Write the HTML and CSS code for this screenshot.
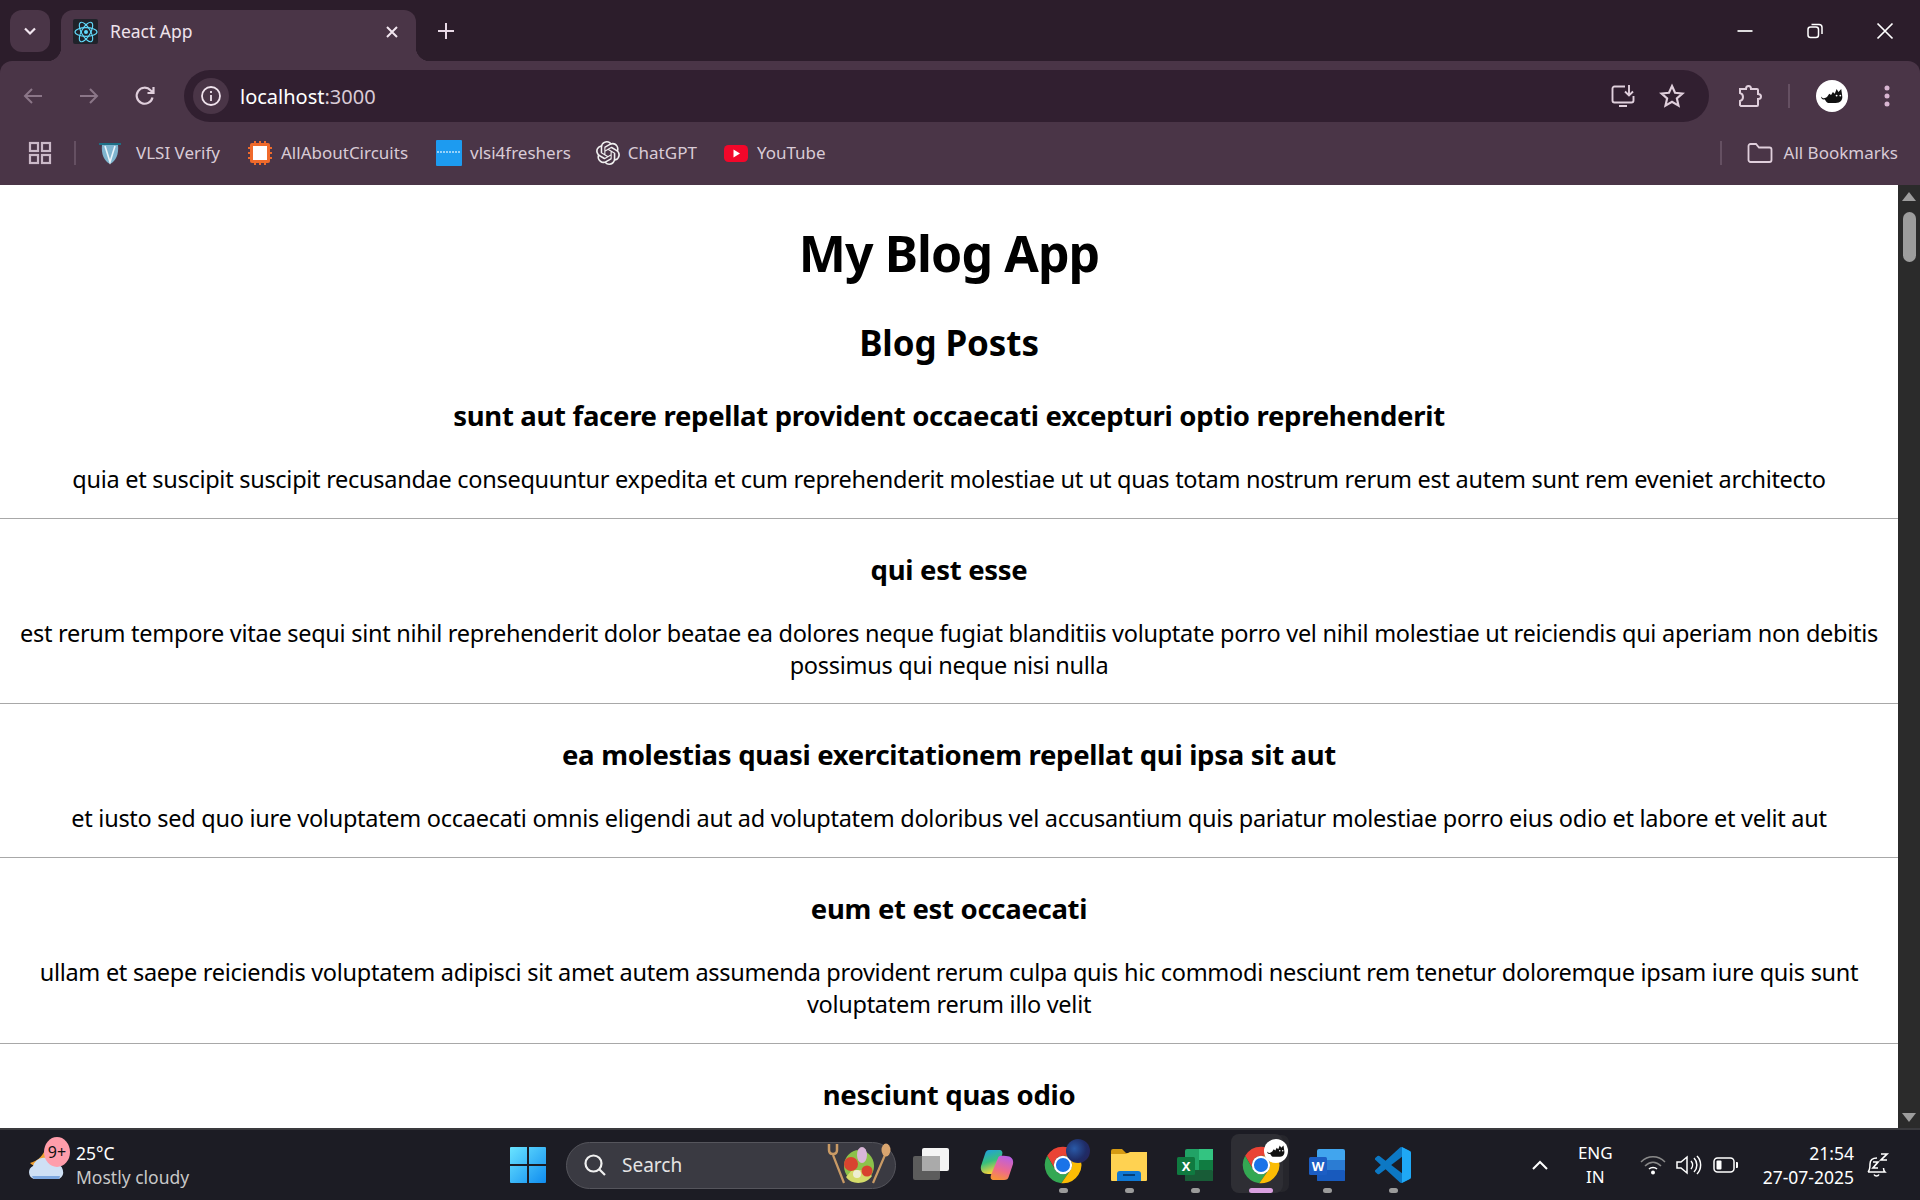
FILE: index.html
```html
<!DOCTYPE html>
<html lang="en">
<head>
<meta charset="utf-8">
<title>React App</title>
<link rel="stylesheet" href="styles.css">
</head>
<body>
<svg class="defs" width="0" height="0">
  <defs>
    <symbol id="chrome" viewBox="0 0 48 48">
      <path fill="#ea4335" d="M24 2A22 22 0 0 1 43.05 13H24A11 11 0 0 0 14.500 29.500L5 13A22 22 0 0 1 24 2Z"/>
      <path fill="#34a853" d="M5 13A22 22 0 0 0 22 45.900L33.500 29.500A11 11 0 0 1 14.500 29.500Z"/>
      <path fill="#fbbc04" d="M43.050 13A22 22 0 0 1 22 45.900L33.500 29.500A11 11 0 0 0 24 13Z"/>
      <circle cx="24" cy="24" r="11" fill="#fff"/>
      <circle cx="24" cy="24" r="8.500" fill="#1a73e8"/>
    </symbol>
    <symbol id="cat" viewBox="0 0 26 20">
      <path fill="#111" d="M1 10C3 13 6 12 8 10L10 7 12 8.500 14 5 16 7 18 2 20 5 23 2 24 9C25 14 22 17 17 17H9C7 17 6 14 5 13C3 14 1 12 1 10Z"/>
      <circle cx="18" cy="9" r="1" fill="#fff"/><circle cx="22" cy="9" r="1" fill="#fff"/>
    </symbol>
  </defs>
</svg>

<div class="screen">
  <header class="chrome">
    <div class="tabstrip">
      <button class="tabsearch">
        <svg width="16" height="16" viewBox="0 0 16 16"><path d="M3 5.500 8 10.500 13 5.500" fill="none" stroke="#f2e6f0" stroke-width="2.200"/></svg>
      </button>
      <div class="tab">
        <span class="favicon">
          <svg width="24" height="24" viewBox="0 0 24 24" fill="none" stroke="#61dafb" stroke-width="1.100">
            <circle cx="12" cy="12" r="2" fill="#61dafb" stroke="none"/>
            <ellipse cx="12" cy="12" rx="11" ry="4.400"/>
            <ellipse cx="12" cy="12" rx="11" ry="4.400" transform="rotate(60 12 12)"/>
            <ellipse cx="12" cy="12" rx="11" ry="4.400" transform="rotate(120 12 12)"/>
          </svg>
        </span>
        <span class="tabtitle">React App</span>
        <svg class="tabclose" width="14" height="14" viewBox="0 0 14 14"><path d="M2 2 12 12M12 2 2 12" stroke="#f2e6f0" stroke-width="2"/></svg>
      </div>
      <svg class="newtab" width="18" height="18" viewBox="0 0 18 18"><path d="M9 1V17M1 9H17" stroke="#e9d9e6" stroke-width="2"/></svg>
      <div class="winctl">
        <svg width="70" height="20" viewBox="0 0 20 20"><path d="M2.500 10H17.500" stroke="#fff" stroke-width="1.700"/></svg>
        <svg width="70" height="20" viewBox="0 0 20 20" fill="none" stroke="#fff" stroke-width="1.500"><rect x="3" y="6" width="10.500" height="10.500" rx="2.500"/><path d="M6.500 3.500H14A3 3 0 0 1 17 6.500V13"/></svg>
        <svg width="70" height="20" viewBox="0 0 20 20"><path d="M2.500 2.500 17.500 17.500M17.500 2.500 2.500 17.500" stroke="#fff" stroke-width="1.700"/></svg>
      </div>
    </div>

    <div class="toolbar">
      <div class="navs">
        <svg width="24" height="24" viewBox="0 0 24 24" fill="none" stroke="#8b7688" stroke-width="2"><path d="M21 12H4M11 5 4 12 11 19"/></svg>
        <svg width="24" height="24" viewBox="0 0 24 24" fill="none" stroke="#8b7688" stroke-width="2"><path d="M3 12H20M13 5 20 12 13 19"/></svg>
        <svg width="24" height="24" viewBox="0 0 24 24" fill="none" stroke="#e0cfdc" stroke-width="2.200"><path d="M19.500 13.500A8 8 0 1 1 17.500 6.200L20 8.500M20.500 3V9H14.500"/></svg>
      </div>
      <div class="omnibox">
        <span class="infochip">
          <svg width="22" height="22" viewBox="0 0 22 22" fill="none" stroke="#f0e3ed" stroke-width="1.800"><circle cx="11" cy="11" r="9"/><path d="M11 10V16M11 6V8"/></svg>
        </span>
        <span class="url"><span class="host">localhost</span>:3000</span>
        <svg class="omniicon" width="26" height="26" viewBox="0 0 26 26" fill="none" stroke="#e0cfdc" stroke-width="1.900"><path d="M15 3.500H4.500A2 2 0 0 0 2.500 5.500V17.500A2 2 0 0 0 4.500 19.500H21.500A2 2 0 0 0 23.500 17.500V13M19 2V12M15 8.500 19 12.500 23 8.500M9 23H17"/></svg>
        <svg class="omniicon star" width="26" height="26" viewBox="0 0 24 24" fill="none" stroke="#e0cfdc" stroke-width="2"><path d="M12 2.800 14.800 9 21.600 9.700 16.500 14.200 18 20.900 12 17.400 6 20.900 7.500 14.200 2.400 9.700 9.200 9Z"/></svg>
      </div>
      <svg class="ext" width="26" height="26" viewBox="0 0 26 26" fill="none" stroke="#e0cfdc" stroke-width="2"><path d="M3 6H9C9 2 14 2 14 6H20A1 1 0 0 1 21 7V11C25 11 25 16 21 16V22A1 1 0 0 1 20 23H4L3 22V18C7 17 7 11 3 10Z"/></svg>
      <span class="vsep tool"></span>
      <span class="avatar">
        <svg width="24" height="19"><use href="#cat"/></svg>
      </span>
      <svg class="menu" width="8" height="24" viewBox="0 0 8 24" fill="#d9b6d2"><circle cx="4" cy="4" r="2.500"/><circle cx="4" cy="12" r="2.500"/><circle cx="4" cy="20" r="2.500"/></svg>
    </div>

    <nav class="bookmarks">
      <svg class="apps" width="24" height="24" viewBox="0 0 24 24" fill="none" stroke="#cbb9c8" stroke-width="2.200"><rect x="2" y="2" width="8" height="8"/><rect x="14" y="2" width="8" height="8"/><rect x="2" y="14" width="8" height="8"/><rect x="14" y="14" width="8" height="8"/></svg>
      <span class="vsep mark"></span>
      <a class="bm first">
        <svg width="24" height="24" viewBox="0 0 24 24"><path fill="#7fb5cf" d="M4 4H20C21 13 18 20 12 23C6 20 3 13 4 4Z"/><path d="M1 3H23" stroke="#1d6f85" stroke-width="2"/><path d="M7 5 12 21 17 5" fill="none" stroke="#e8f4fa" stroke-width="1.600"/></svg>
        VLSI Verify
      </a>
      <a class="bm circuits">
        <svg width="26" height="26" viewBox="0 0 26 26"><path fill="#ef6a2b" d="M5 3H21A2 2 0 0 1 23 5V21A2 2 0 0 1 21 23H5A2 2 0 0 1 3 21V5A2 2 0 0 1 5 3Z"/><path stroke="#ef6a2b" stroke-width="2" d="M1 8H25M1 13H25M1 18H25M8 1V25M13 1V25M18 1V25"/><rect x="6" y="6" width="14" height="14" fill="#fff"/></svg>
        AllAboutCircuits
      </a>
      <a class="bm">
        <svg width="26" height="26" viewBox="0 0 26 26"><rect width="26" height="26" rx="1" fill="#1d9bf0"/><path d="M1 12H25" stroke="#bfe3fb" stroke-width="1.600" stroke-dasharray="2 1"/></svg>
        vlsi4freshers
      </a>
      <a class="bm gpt">
        <svg width="24" height="24" viewBox="0 0 24 24"><path fill="#f0f0f0" d="M22.2819 9.8211a5.9847 5.9847 0 0 0-.5157-4.9108 6.0462 6.0462 0 0 0-6.5098-2.9A6.0651 6.0651 0 0 0 4.9807 4.1818a5.9847 5.9847 0 0 0-3.9977 2.9 6.0462 6.0462 0 0 0 .7427 7.0966 5.98 5.98 0 0 0 .511 4.9107 6.051 6.051 0 0 0 6.5146 2.9001A5.9847 5.9847 0 0 0 13.2599 24a6.0557 6.0557 0 0 0 5.7718-4.2058 5.9894 5.9894 0 0 0 3.9977-2.9001 6.0557 6.0557 0 0 0-.7475-7.0729zm-9.022 12.6081a4.4755 4.4755 0 0 1-2.8764-1.0408l.1419-.0804 4.7783-2.7582a.7948.7948 0 0 0 .3927-.6813v-6.7369l2.02 1.1686a.071.071 0 0 1 .038.052v5.5826a4.504 4.504 0 0 1-4.4945 4.4944zm-9.6607-4.1254a4.4708 4.4708 0 0 1-.5346-3.0137l.142.0852 4.783 2.7582a.7712.7712 0 0 0 .7806 0l5.8428-3.3685v2.3324a.0804.0804 0 0 1-.0332.0615L9.74 19.9502a4.4992 4.4992 0 0 1-6.1408-1.6464zM2.3408 7.8956a4.485 4.485 0 0 1 2.3655-1.9728V11.6a.7664.7664 0 0 0 .3879.6765l5.8144 3.3543-2.0201 1.1685a.0757.0757 0 0 1-.071 0l-4.8303-2.7865A4.504 4.504 0 0 1 2.3408 7.872zm16.5963 3.8558L13.1038 8.364 15.1192 7.2a.0757.0757 0 0 1 .071 0l4.8303 2.7913a4.4944 4.4944 0 0 1-.6765 8.1042v-5.6772a.79.79 0 0 0-.407-.667zm2.0107-3.0231l-.142-.0852-4.7735-2.7818a.7759.7759 0 0 0-.7854 0L9.409 9.2297V6.8974a.0662.0662 0 0 1 .0284-.0615l4.8303-2.7866a4.4992 4.4992 0 0 1 6.6802 4.66zM8.3065 12.863l-2.02-1.1638a.0804.0804 0 0 1-.038-.0567V6.0742a4.4992 4.4992 0 0 1 7.3757-3.4537l-.142.0805L8.704 5.459a.7948.7948 0 0 0-.3927.6813zm1.0976-2.3654l2.602-1.4998 2.6069 1.4998v2.9994l-2.5974 1.4997-2.6067-1.4997Z"/></svg>
        ChatGPT
      </a>
      <a class="bm">
        <svg width="26" height="26" viewBox="0 0 26 26"><rect x="1" y="5" width="24" height="17" rx="4.500" fill="#f2072a"/><path d="M10.500 9.500 17 13.500 10.500 17.500Z" fill="#fff"/></svg>
        YouTube
      </a>
      <span class="vsep mark right"></span>
      <a class="bm all">
        <svg width="26" height="22" viewBox="0 0 26 22" fill="none" stroke="#e0cfdc" stroke-width="1.800"><path d="M1.500 4A2 2 0 0 1 3.500 2H9L12 5.500H22.500A2 2 0 0 1 24.500 7.500V18A2 2 0 0 1 22.500 20H3.500A2 2 0 0 1 1.500 18Z"/></svg>
        All Bookmarks
      </a>
    </nav>
  </header>

  <div class="viewport">
    <main class="page">
      <h1>My Blog App</h1>
      <h2>Blog Posts</h2>
      <article class="post">
        <h3>sunt aut facere repellat provident occaecati excepturi optio reprehenderit</h3>
        <p>quia et suscipit suscipit recusandae consequuntur expedita et cum reprehenderit molestiae ut ut quas totam nostrum rerum est autem sunt rem eveniet architecto</p>
      </article>
      <article class="post">
        <h3>qui est esse</h3>
        <p>est rerum tempore vitae sequi sint nihil reprehenderit dolor beatae ea dolores neque fugiat blanditiis voluptate porro vel nihil molestiae ut reiciendis qui aperiam non debitis possimus qui neque nisi nulla</p>
      </article>
      <article class="post">
        <h3>ea molestias quasi exercitationem repellat qui ipsa sit aut</h3>
        <p>et iusto sed quo iure voluptatem occaecati omnis eligendi aut ad voluptatem doloribus vel accusantium quis pariatur molestiae porro eius odio et labore et velit aut</p>
      </article>
      <article class="post">
        <h3>eum et est occaecati</h3>
        <p>ullam et saepe reiciendis voluptatem adipisci sit amet autem assumenda provident rerum culpa quis hic commodi nesciunt rem tenetur doloremque ipsam iure quis sunt voluptatem rerum illo velit</p>
      </article>
      <article class="post">
        <h3>nesciunt quas odio</h3>
      </article>
    </main>
    <div class="scrollbar">
      <svg width="14" height="9" viewBox="0 0 14 9"><path d="M7 0 14 9H0Z" fill="#9d9d9d"/></svg>
      <span class="thumb"></span>
      <span class="grow"></span>
      <svg width="14" height="9" viewBox="0 0 14 9"><path d="M0 0H14L7 9Z" fill="#9d9d9d"/></svg>
    </div>
  </div>

  <footer class="taskbar">
    <div class="weather">
      <span class="wicon">
        <svg width="42" height="44" viewBox="0 0 42 44"><path fill="#f0a030" d="M20 4C18 12 12 18 4 20C9 25 18 24 24 18C26 14 24 8 20 4Z"/><path fill="#cfe0f5" d="M8 36A7 7 0 0 1 7 23A12 12 0 0 1 29 21A8 8 0 0 1 33 36Z"/><path fill="#7ea8e0" d="M6 33H34A8 8 0 0 1 33 36H8A7 7 0 0 1 6 33Z"/></svg>
        <span class="wbadge">9+</span>
      </span>
      <span class="wtext"><span class="wtemp">25°C</span><span class="wdesc">Mostly cloudy</span></span>
    </div>
    <svg class="start" width="36" height="36" viewBox="0 0 36 36">
      <defs><linearGradient id="win" x1="0" y1="0" x2="1" y2="1"><stop offset="0" stop-color="#6ae4ff"/><stop offset="1" stop-color="#0f8cf0"/></linearGradient></defs>
      <path fill="url(#win)" d="M0 1A1 1 0 0 1 1 0H17V17H0ZM19 0H35A1 1 0 0 1 36 1V17H19ZM0 19H17V36H1A1 1 0 0 1 0 35ZM19 19H36V35A1 1 0 0 1 35 36H19Z"/>
    </svg>
    <div class="search">
      <svg width="24" height="24" viewBox="0 0 24 24" fill="none" stroke="#f0f0f0" stroke-width="2.200"><circle cx="10.500" cy="10.500" r="8"/><path d="M16.500 16.500 22 22"/></svg>
      <span class="searchlabel">Search</span>
      <svg class="salad" width="66" height="44" viewBox="0 0 66 44">
        <path d="M7 12 18 40M59 12 47 40" stroke="#c99a65" stroke-width="2.200"/>
        <path d="M3 1V7C3 10 5 11 7 11C9 11 11 10 11 7V1" fill="none" stroke="#c99a65" stroke-width="2.500"/>
        <ellipse cx="60" cy="7" rx="4.500" ry="6.500" fill="#d9a56f"/>
        <ellipse cx="33" cy="23" rx="15" ry="16" fill="#8cc24a"/>
        <path d="M20 34C25 42 40 42 46 33L40 27H26Z" fill="#d4dc6a"/>
        <circle cx="25" cy="21" r="7" fill="#d8432f"/><circle cx="41" cy="28" r="5.500" fill="#d8432f"/>
        <ellipse cx="36" cy="12" rx="5" ry="8" fill="#d9b6d8"/>
        <circle cx="31" cy="31" r="4" fill="#eeeed2"/>
      </svg>
    </div>
    <div class="apps-row">
      <span class="task">
        <svg width="40" height="40" viewBox="0 0 40 40"><rect x="2" y="11" width="27" height="24" rx="2" fill="#5c5c5c"/><rect x="11" y="3" width="27" height="23" rx="2" fill="#f4f4f4"/><rect x="11" y="11" width="18" height="15" fill="#aaa"/></svg>
      </span>
      <span class="task">
        <svg width="34" height="32" viewBox="0 0 34 32">
          <defs>
            <linearGradient id="cp1" x1="0" y1="0" x2=".3" y2="1"><stop offset="0" stop-color="#1e9be8"/><stop offset=".55" stop-color="#38c07c"/><stop offset="1" stop-color="#f2d33c"/></linearGradient>
            <linearGradient id="cp2" x1=".7" y1="0" x2=".4" y2="1"><stop offset="0" stop-color="#b85fe6"/><stop offset=".6" stop-color="#ee6a8c"/><stop offset="1" stop-color="#f7923c"/></linearGradient>
          </defs>
          <path fill="url(#cp1)" d="M9 1H19C22 1 23 3 22 6L16 23C15 26 12 25 8 25C3 25 0 22 1 17L5 5C6 2 7 1 9 1Z"/>
          <path fill="url(#cp2)" d="M24 31H14C11 31 10 29 11 26L18 9C19 6 22 7 26 7C31 7 34 10 33 15L29 27C28 30 27 31 24 31Z"/>
        </svg>
      </span>
      <span class="task">
        <svg width="40" height="40"><use href="#chrome"/></svg>
        <i class="avatar-badge blue"></i>
        <i class="dot"></i>
      </span>
      <span class="task">
        <svg width="36" height="32" viewBox="0 0 36 32"><path fill="#d69a12" d="M0 2A2 2 0 0 1 2 0H11L15 4H36V12H0Z"/><path fill="#ffd251" d="M0 5H15L19 3H36V31A1 1 0 0 1 35 32H1A1 1 0 0 1 0 31Z"/><path fill="#0f78d4" d="M6 25A3 3 0 0 1 9 22H27A3 3 0 0 1 30 25V32H6Z"/><path d="M12 26H24" stroke="#063e75" stroke-width="2"/></svg>
        <i class="dot"></i>
      </span>
      <span class="task">
        <svg width="36" height="34" viewBox="0 0 36 34"><rect x="8" y="1" width="28" height="32" rx="2" fill="#21a366"/><rect x="22" y="1" width="14" height="11" fill="#33c481"/><rect x="8" y="22" width="28" height="11" rx="1" fill="#185c37"/><rect x="22" y="12" width="14" height="10" fill="#107c41"/><rect x="0" y="9" width="18" height="18" rx="1.500" fill="#0f7a40"/><text class="appletter" x="9" y="23">X</text></svg>
        <i class="dot"></i>
      </span>
      <span class="task active">
        <span class="taskframe"></span>
        <svg width="40" height="40"><use href="#chrome"/></svg>
        <i class="avatar-badge white"><svg width="20" height="15"><use href="#cat"/></svg></i>
        <i class="dot wide"></i>
      </span>
      <span class="task">
        <svg width="36" height="34" viewBox="0 0 36 34"><rect x="8" y="1" width="28" height="32" rx="2" fill="#41a5ee"/><rect x="8" y="12" width="28" height="10" fill="#2b7cd3"/><rect x="8" y="22" width="28" height="11" rx="1" fill="#185abd"/><rect x="0" y="9" width="18" height="18" rx="1.500" fill="#1c5ec4"/><text class="appletter" x="9" y="23">W</text></svg>
        <i class="dot"></i>
      </span>
      <span class="task">
        <svg width="36" height="36" viewBox="0 0 100 100">
          <path fill="#0c78c4" d="M96.500 10.800 75.900.9a6.200 6.200 0 0 0-7.100 1.200L29.400 38 12.200 25a4.200 4.200 0 0 0-5.300.2L1.400 30.200a4.200 4.200 0 0 0 0 6.200L16.300 50 1.400 63.600a4.200 4.200 0 0 0 0 6.200l5.500 5a4.200 4.200 0 0 0 5.300.2l17.200-13 39.400 35.900a6.200 6.200 0 0 0 7.100 1.200l20.600-9.900a6.200 6.200 0 0 0 3.500-5.600V16.400a6.200 6.200 0 0 0-3.500-5.600Z"/>
          <path fill="#1fa8f5" d="M75 .6 75.900.9 96.500 10.800a6.200 6.200 0 0 1 3.500 5.600V83.600a6.200 6.200 0 0 1-3.500 5.600L75.900 99.100 75 99.400Z"/>
          <path fill="#1c1c24" d="M75 27.300 45 50 75 72.700Z"/>
        </svg>
        <i class="dot"></i>
      </span>
    </div>
    <div class="tray">
      <svg class="traychev" width="18" height="12" viewBox="0 0 18 12"><path d="M2 10 9 3 16 10" fill="none" stroke="#fff" stroke-width="2"/></svg>
      <span class="lang"><span>ENG</span><span>IN</span></span>
      <svg class="wifi" width="26" height="20" viewBox="0 0 26 20" fill="none" stroke="#8a8a8a" stroke-width="1.500"><path d="M1 7C8 0 18 0 25 7M5 11C10 6 16 6 21 11"/><path d="M9 14C11 12 15 12 17 14" stroke="#fff"/><circle cx="13" cy="17.500" r="2" fill="#fff" stroke="none"/></svg>
      <svg class="vol" width="26" height="22" viewBox="0 0 26 22" fill="none" stroke="#fff" stroke-width="1.500"><path d="M1 8V14H5L11 19V3L5 8Z"/><path d="M15 7A6 6 0 0 1 15 15M18 4A10 10 0 0 1 18 18M21 2A13 13 0 0 1 21 20"/></svg>
      <svg class="batt" width="26" height="16" viewBox="0 0 26 16"><rect x="1" y="1" width="20" height="14" rx="3.500" fill="none" stroke="#fff" stroke-width="1.500"/><rect x="3.500" y="3.500" width="5" height="9" rx="1" fill="#fff"/><path d="M23 5H24A1 1 0 0 1 25 6V10A1 1 0 0 1 24 11H23Z" fill="#fff"/></svg>
      <span class="clock"><span>21:54</span><span>27-07-2025</span></span>
      <span class="bell">
        <svg width="24" height="26" viewBox="0 0 24 26" fill="none" stroke="#fff" stroke-width="1.500"><path d="M2 20C4 18 4 15 4 12C4 8 7 6 11 6M2 20H19C18 19 17.500 17.500 17.500 16M8 22.500C9 24.500 12 24.500 13 22.500"/><path d="M7 10H12L7 16H12M15 2H21L15 8H21" stroke-width="1.700"/></svg>
      </span>
    </div>
  </footer>
</div>
</body>
</html>
```

FILE: styles.css
```css
* { box-sizing: border-box; }
html, body { margin: 0; height: 100%; overflow: hidden; }
body { font-family: "Noto Sans", "Open Sans", sans-serif; color: #000; background: #fff; }
.defs { position: absolute; }
.screen { display: flex; flex-direction: column; height: 1200px; width: 1920px; }
svg { display: block; flex: none; }

/* browser chrome */
.chrome { background: #2c1d2b; flex: none; height: 185px; color: #f3e8f0; }
.tabstrip { height: 61px; display: flex; align-items: flex-end; padding-left: 10px; position: relative; }
.tabsearch { width: 40px; height: 42px; margin-bottom: 9px; border: 0; border-radius: 12px; background: #4a3547; display: flex; align-items: center; justify-content: center; padding: 0; }
.tab { width: 355px; height: 51px; margin-left: 11px; background: #4a3547; border-radius: 12px 12px 0 0; display: flex; align-items: center; padding: 0 17px 8px 12px; position: relative; }
.tab::before, .tab::after { content: ""; position: absolute; bottom: 0; width: 14px; height: 14px; }
.tab::before { left: -14px; background: radial-gradient(circle at 0 0, transparent 14px, #4a3547 14.500px); }
.tab::after { right: -14px; background: radial-gradient(circle at 100% 0, transparent 14px, #4a3547 14.500px); }
.favicon { width: 25px; height: 25px; background: #20232a; border-radius: 2px; display: flex; align-items: center; justify-content: center; }
.tabtitle { margin-left: 12px; font-size: 17.500px; line-height: 22px; padding-bottom: 2px; flex: 1; color: #efe3ec; }
.newtab { margin: 0 0 21px 21px; }
.winctl { margin-left: auto; display: flex; align-items: center; margin-bottom: 20px; }
.toolbar { height: 63px; background: #4a3547; border-radius: 12px 12px 0 0; display: flex; align-items: center; padding: 7px 0 0 21px; }
.navs { display: flex; gap: 32px; width: 163px; }
.omnibox { width: 1525px; height: 52px; border-radius: 26px; background: #311f30; display: flex; align-items: center; padding: 0 24px 0 9px; }
.infochip { width: 36px; height: 36px; border-radius: 50%; background: #4a3547; display: flex; align-items: center; justify-content: center; }
.url { margin-left: 11px; font-size: 20px; color: #d9cbd6; flex: 1; }
.host { color: #fff; }
.omniicon { margin-left: 23px; }
.ext { margin-left: 28px; }
.vsep { display: block; width: 2px; background: #655062; flex: none; }
.vsep.tool { height: 24px; margin-left: 25px; }
.avatar { width: 32px; height: 32px; border-radius: 50%; background: #fff; margin-left: 26px; display: flex; align-items: center; justify-content: center; }
.menu { margin-left: 35px; }
.bookmarks { height: 61px; background: #4a3547; display: flex; align-items: center; padding: 0 22px 4px 28px; }
.bm { display: flex; align-items: center; gap: 8px; font-size: 17px; color: #d9cbd6; white-space: nowrap; margin-right: 25px; }
.bm.first { gap: 14px; margin-right: 27px; }
.bm.circuits { margin-right: 28px; }
.bm.gpt { margin-right: 26px; }
.vsep.mark { height: 24px; margin: 0 22px 0 22px; }
.vsep.mark.right { margin: 0 25px 0 auto; }
.bm.all { margin-right: 0; gap: 11px; }

/* page */
.viewport { flex: 1; display: flex; min-height: 0; border-bottom: 2px solid #3a3a3e; }
.page { flex: 1; overflow: hidden; text-align: center; min-width: 0; }
h1 { font-size: 50px; line-height: 64px; margin: 36px 0 0; font-weight: 700; letter-spacing: -.9px; }
h2 { font-size: 35px; line-height: 44px; margin: 36px 0 0; font-weight: 700; letter-spacing: -.1px; }
h3 { font-size: 27.500px; line-height: 37px; margin: 0 0 29px; font-weight: 700; letter-spacing: -.3px; }
.post { padding: 32px 8px 22.700px; border-bottom: 1px solid #a8a8a8; }
.post p { margin: 0; font-size: 23.500px; line-height: 32px; letter-spacing: -.28px; }
.scrollbar { width: 22px; flex: none; background: #2b2b2b; display: flex; flex-direction: column; align-items: center; padding: 7px 0 6px; }
.thumb { width: 13px; height: 50px; border-radius: 7px; background: #9d9d9d; margin-top: 11px; }
.grow { flex: 1; }

/* taskbar */
.taskbar { height: 70px; flex: none; background: #1c1c24; display: flex; align-items: center; color: #fff; position: relative; }
.weather { width: 510px; display: flex; align-items: center; padding-left: 26px; flex: none; }
.wicon { width: 42px; height: 44px; position: relative; }
.wbadge { position: absolute; left: 18px; top: -6px; width: 26px; height: 30px; border-radius: 50%; background: #ff9dab; color: #111; font-size: 16px; line-height: 30px; text-align: center; }
.wtext { display: flex; flex-direction: column; margin-left: 8px; }
.wtemp { font-size: 17.500px; line-height: 24px; padding-bottom: 1px; }
.wdesc { font-size: 17.500px; line-height: 23px; color: #c8c8c8; }
.search { width: 330px; height: 47px; margin-left: 20px; border-radius: 24px; background: #3a3a42; border: 1px solid #55555c; display: flex; align-items: center; padding-left: 16px; }
.searchlabel { margin-left: 15px; font-size: 19px; color: #e4e4e4; flex: 1; }
.salad { margin-right: 3px; }
.apps-row { display: flex; margin-left: 2px; }
.task { width: 66px; height: 70px; display: flex; align-items: center; justify-content: center; position: relative; }
.dot { position: absolute; bottom: 7px; left: 29px; width: 9px; height: 5px; border-radius: 3px; background: #9b9b9b; }
.dot.wide { left: 21px; width: 24px; background: #d9a0e0; }
.taskframe { position: absolute; left: 3px; width: 52px; top: 4px; bottom: 7px; border-radius: 8px; background: #2e2e34; box-shadow: 7px 0 0 -1px #26262c; }
.task svg { position: relative; }
.avatar-badge { position: absolute; left: 36px; top: 9px; width: 24px; height: 24px; border-radius: 50%; display: flex; align-items: center; justify-content: center; }
.avatar-badge.blue { background: radial-gradient(circle at 35% 40%, #2a5aa8, #1f2c66 55%, #2a1f55 100%); }
.avatar-badge.white { background: #fff; }
.appletter { font-family: "Noto Sans", sans-serif; font-size: 13px; font-weight: 700; fill: #fff; text-anchor: middle; }
.tray { margin-left: auto; display: flex; align-items: center; padding-right: 30px; }
.traychev { margin-right: 0; }
.lang { display: flex; flex-direction: column; align-items: center; font-size: 17px; line-height: 24px; margin-left: 29px; }
.wifi { margin-left: 27px; }
.vol { margin-left: 10px; }
.batt { margin-left: 11px; }
.clock { display: flex; flex-direction: column; align-items: flex-end; font-size: 17.500px; line-height: 24px; margin-left: 24px; }
.bell { margin-left: 12px; }
```
